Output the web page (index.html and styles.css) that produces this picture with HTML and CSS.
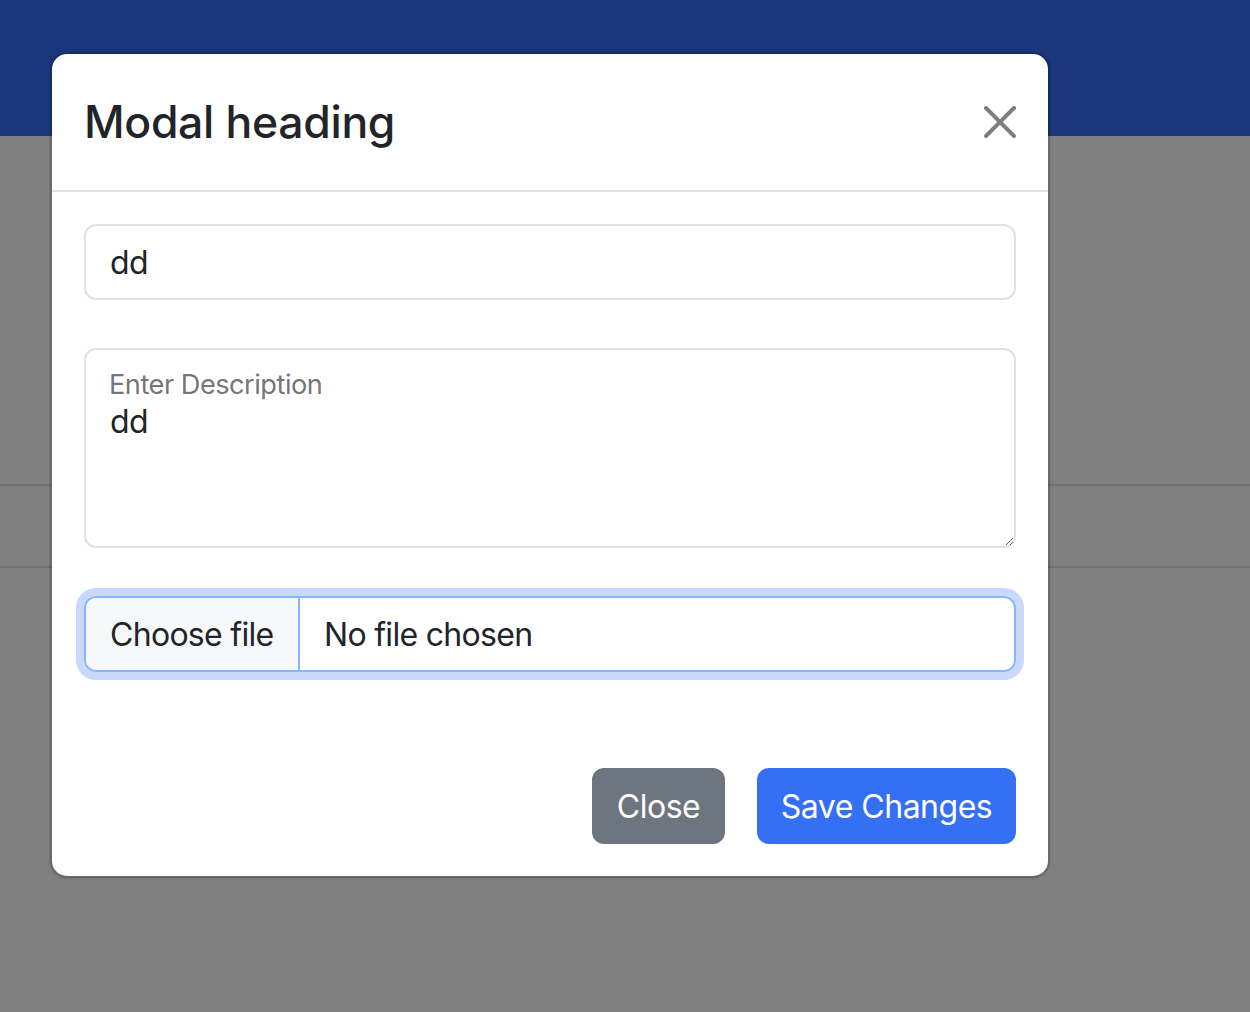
FILE: index.html
```html
<!DOCTYPE html>
<html lang="en">
<head>
<meta charset="utf-8">
<title>Modal</title>
<link rel="stylesheet" href="styles.css">
</head>
<body>
<div class="page">
  <header class="topbar"></header>
  <div class="table-rows">
    <div class="row"></div>
  </div>
</div>
<div class="modal">
  <div class="modal-header">
    <h4 class="modal-title">Modal heading</h4>
    <button class="btn-close" type="button" aria-label="Close">
      <svg viewBox="0 0 16 16" width="32" height="32"><path d="M.293.293a1 1 0 0 1 1.414 0L8 6.586 14.293.293a1 1 0 1 1 1.414 1.414L9.414 8l6.293 6.293a1 1 0 0 1-1.414 1.414L8 9.414l-6.293 6.293a1 1 0 0 1-1.414-1.414L6.586 8 .293 1.707a1 1 0 0 1 0-1.414z"/></svg>
    </button>
  </div>
  <div class="modal-body">
    <input class="form-control" type="text" value="dd">
    <div class="form-floating">
      <textarea class="form-textarea">dd</textarea>
      <label class="floating-label">Enter Description</label>
    </div>
    <div class="file-input">
      <span class="file-btn">Choose file</span>
      <span class="file-name">No file chosen</span>
    </div>
  </div>
  <div class="modal-footer">
    <button class="btn btn-secondary" type="button">Close</button>
    <button class="btn btn-primary" type="button">Save Changes</button>
  </div>
</div>
</body>
</html>
```
FILE: styles.css
```css
* { box-sizing: border-box; }
html, body { margin: 0; padding: 0; }
body {
  width: 1250px;
  height: 1012px;
  overflow: hidden;
  background: #808080;
  font-family: Inter, "Noto Sans", "Liberation Sans", sans-serif;
  color: #212529;
  position: relative;
}
.page { height: 1012px; }
.topbar { height: 136px; background: #19377a; }
.table-rows { padding-top: 348px; }
.row {
  height: 84px;
  border-top: 2px solid #737373;
  border-bottom: 2px solid #737373;
}

.modal {
  position: absolute;
  left: 50px;
  top: 52px;
  width: 1000px;
  height: 826px;
  background: #fff;
  background-clip: padding-box;
  border: 2px solid rgba(0,0,0,0.15);
  border-radius: 17px;
  box-shadow: 0 1px 3px rgba(0,0,0,0.1);
  display: flex;
  flex-direction: column;
}
.modal-header {
  height: 138px;
  border-bottom: 2px solid #dee2e6;
  display: flex;
  align-items: center;
  justify-content: space-between;
  padding: 0 32px 0 32px;
}
.modal-title {
  margin: 0;
  font-size: 44.5px;
  font-weight: 500;
  line-height: 66px;
  letter-spacing: -0.3px;
}
.btn-close {
  border: 0;
  background: transparent;
  padding: 0;
  width: 32px;
  height: 32px;
  display: flex;
}
.btn-close svg { fill: #000; opacity: 0.5; }

.modal-body {
  padding: 32px 32px 0 32px;
}
.form-control {
  display: block;
  width: 932px;
  height: 76px;
  margin: 0 0 48px;
  padding: 0 24px;
  border: 2px solid #dee2e6;
  border-radius: 12px;
  font: inherit;
  font-size: 32px;
  letter-spacing: -0.7px;
  color: #212529;
  outline: none;
}
.form-floating {
  position: relative;
  width: 932px;
  margin-bottom: 48px;
}
.form-textarea {
  display: block;
  width: 932px;
  height: 200px;
  padding: 48px 24px 0;
  border: 2px solid #dee2e6;
  border-radius: 12px;
  font: inherit;
  font-size: 32px;
  letter-spacing: -0.7px;
  line-height: 48px;
  color: #212529;
  resize: vertical;
  outline: none;
}
.floating-label {
  position: absolute;
  left: 25px;
  top: 17px;
  font-size: 27.2px;
  line-height: 40px;
  letter-spacing: -0.5px;
  color: rgba(33,37,41,0.65);
}
.file-input {
  width: 932px;
  height: 76px;
  display: flex;
  border: 2px solid #86b7fe;
  border-radius: 12px;
  box-shadow: 0 0 0 8px #c9d9fb;
  overflow: hidden;
  font-size: 32px;
  letter-spacing: -0.7px;
  white-space: nowrap;
}
.file-btn {
  flex: none;
  display: flex;
  align-items: center;
  width: 214px;
  padding: 0 24px;
  background: #f7f8fa;
  border-right: 2px solid #86b7fe;
}
.file-name {
  display: flex;
  align-items: center;
  padding: 0 24px;
}

.modal-footer {
  display: flex;
  justify-content: flex-end;
  gap: 32px;
  padding: 96px 32px 0 32px;
}
.btn {
  height: 76px;
  border: 0;
  border-radius: 12px;
  font: inherit;
  font-size: 32px;
  letter-spacing: -0.5px;
  color: #fff;
  padding: 0;
  text-align: center;
}
.btn-secondary { width: 133px; background: #6d757e; }
.btn-primary { width: 259px; background: #346ff4; }
```
